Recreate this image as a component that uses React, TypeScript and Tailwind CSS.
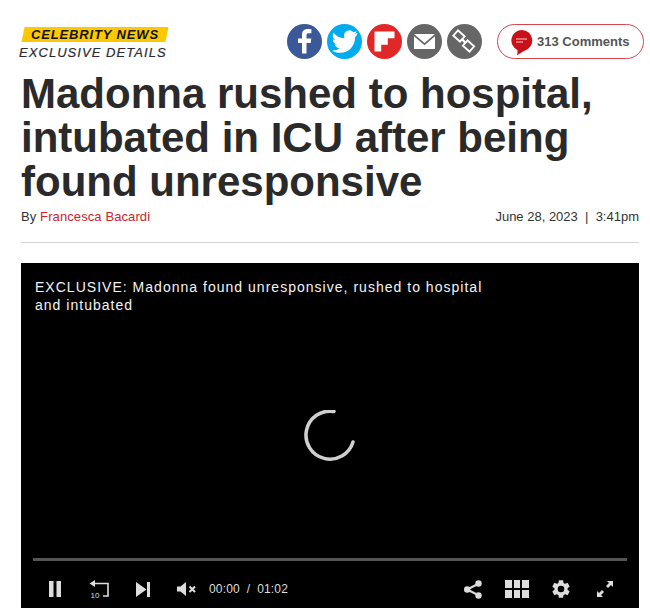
import React from "react";

function Circle({ color, children }: { color: string; children: React.ReactNode }) {
  return (
    <div className={`w-[35px] h-[35px] rounded-full flex items-center justify-center shrink-0 overflow-hidden ${color}`}>
      {children}
    </div>
  );
}

export default function App() {
  return (
    <div className="w-[650px] h-[608px] overflow-hidden bg-white pl-[21px] pr-[11px] pt-[24px] font-['Liberation_Sans',Arial,sans-serif]">
      <div className="flex items-start h-[35px]">
        <div className="w-[268px] shrink-0 -ml-[2px] pt-[3px]">
          <div className="ml-[4px] w-[144px] h-[15px] bg-[#fdc800] -skew-x-12 flex items-center justify-center">
            <span className="skew-x-12 text-[13px] leading-[15px] font-bold italic tracking-[0.85px] text-[#111]">CELEBRITY NEWS</span>
          </div>
          <div className="text-[13px] leading-[16px] mt-[3px] italic tracking-[1.05px] text-[#2a2a35] whitespace-nowrap [-webkit-text-stroke:0.2px_#2a2a35]">EXCLUSIVE DETAILS</div>
        </div>
        <div className="flex gap-[5px]">
          <Circle color="bg-[#3b5998]">
            <svg width="35" height="35" viewBox="0 0 35 35"><path fill="#fff" d="M19.500 29.500V19h4.200l.6-4.500h-4.800v-3c0-1.300.4-2.200 2.200-2.200h2.700V5.200c-.5-.1-2-.2-3.700-.2-3.500 0-5.700 2.100-5.700 5.900v3.600h-4V19h4v10.500z"/></svg>
          </Circle>
          <Circle color="bg-[#00aced]">
            <svg width="27" height="27" viewBox="0 0 24 24"><path fill="#fff" d="M23.500 4.500c-.8.400-1.800.6-2.700.8 1-.6 1.700-1.500 2.100-2.600-.9.500-1.900.9-3 1.100A4.700 4.700 0 0 0 11.800 8.100c0 .4 0 .7.100 1.100C8 9 4.500 7.100 2.200 4.200c-.4.700-.6 1.500-.6 2.400 0 1.600.8 3.100 2.100 3.900-.8 0-1.500-.2-2.100-.6v.1c0 2.300 1.600 4.200 3.800 4.600-.7.200-1.400.2-2.100.1.600 1.900 2.300 3.200 4.400 3.300A9.500 9.500 0 0 1 .8 20c2.100 1.300 4.600 2.100 7.200 2.100 8.700 0 13.400-7.200 13.400-13.400v-.6c.9-.7 1.700-1.500 2.100-3.600z"/></svg>
          </Circle>
          <Circle color="bg-[#e12828]">
            <svg width="35" height="35" viewBox="0 0 35 35"><path fill="#fff" d="M7.500 7.500h20v6.700h-6.700v6.600h-6.600v6.700H7.500z"/></svg>
          </Circle>
          <Circle color="bg-[#666666]">
            <svg width="35" height="35" viewBox="0 0 35 35"><path fill="#fff" d="M7 10h21L17.500 19zM7 12.300V25h21V12.300l-10.500 9z"/></svg>
          </Circle>
          <Circle color="bg-[#666666]">
            <svg width="35" height="35" viewBox="0 0 35 35" fill="none" stroke="#fff" strokeWidth="1.800"><rect x="7.500" y="8.500" width="9" height="7" transform="rotate(42 12 12)"/><rect x="17" y="18.500" width="9" height="7" transform="rotate(42 21.500 22)"/><path strokeWidth="2.200" d="M14.500 14.500l4.500 5"/></svg>
          </Circle>
        </div>
        <div className="ml-[15px] w-[147px] h-[35px] shrink-0 rounded-full border border-[#d9444b] flex items-center pl-[14px]">
          <svg width="22" height="27" viewBox="0 0 22 27" className="shrink-0 mt-[2px] -ml-[1px]">
            <path fill="#c8101a" d="M11 1a10.500 10.500 0 0 1 3 20.500C11 23 8 25 6 26.500c.5-1.800.6-3.500.4-5.500A10.500 10.500 0 0 1 11 1z"/>
            <path stroke="#f6c9c9" strokeWidth="1.200" d="M5 10h11M5 13h7"/>
          </svg>
          <span className="ml-[4px] text-[13px] font-bold text-[#555] leading-none whitespace-nowrap">313 Comments</span>
        </div>
      </div>

      <h1 className="mt-[13px] text-[42px] leading-[44px] font-bold text-[#2a2a2a] whitespace-nowrap">
        Madonna rushed to hospital,<br />intubated in ICU after being<br />found unresponsive
      </h1>

      <div className="flex justify-between items-center h-[16px] mt-[5px] text-[13px] text-[#333]">
        <div className="tracking-[0.1px]">By <span className="text-[#d0232b]">Francesca Bacardi</span></div>
        <div className="whitespace-pre">June 28, 2023  |  3:41pm</div>
      </div>

      <div className="h-px bg-[#d5d5d5] mt-[17px]" />

      <div className="mt-[20px] relative bg-black flex flex-col">
        <div className="absolute left-[14px] top-[15px] w-[470px] text-[14px] leading-[18px] tracking-[1.02px] text-[#f4f4f4]">
          EXCLUSIVE: Madonna found unresponsive, rushed to hospital and intubated
        </div>
        <div className="h-[295px] pt-[51px] flex items-center justify-center">
          <svg width="52" height="52" viewBox="0 0 52 52" className="-ml-[1px]">
            <path fill="none" stroke="#cfcfcf" strokeWidth="3.500" strokeLinecap="round" d="M30 1.500A24 24 0 1 0 49 32" />
          </svg>
        </div>
        <div className="h-[3px] mx-[12px] bg-[#555555]" />
        <div className="h-[56px] flex items-center justify-between pl-[28px] pr-[26px] text-[#dddddd]">
          <div className="flex items-center">
            <svg width="12" height="16" viewBox="0 0 12 16" fill="#dddddd"><rect width="4.500" height="16" /><rect x="7.500" width="4.500" height="16" /></svg>
            <svg width="20" height="18" viewBox="0 0 20 18" className="ml-[28px]" fill="none">
              <path stroke="#dddddd" strokeWidth="1.600" d="M4 3.500h15v12.500h-5" />
              <path fill="#dddddd" d="M6 0v7L0.500 3.500z" />
              <text x="1.500" y="17.500" fill="#dddddd" fontSize="8" fontFamily="Liberation Sans">10</text>
            </svg>
            <svg width="14" height="15" viewBox="0 0 14 15" className="ml-[27px]" fill="#dddddd"><path d="M0 0l10.500 7.500L0 15z" /><rect x="11" width="3" height="15" /></svg>
            <svg width="20" height="14" viewBox="0 0 20 14" className="ml-[27px]"><path fill="#dddddd" d="M0 4.500h3.500L9 0v14L3.500 9.500H0z" /><path stroke="#dddddd" strokeWidth="2" d="M12.500 4.500l5.500 5.500M18 4.500l-5.500 5.500" /></svg>
            <div className="ml-[12px] text-[12px] leading-none tracking-[0.15px] whitespace-pre">00:00  /  01:02</div>
          </div>
          <div className="flex items-center">
            <svg width="18" height="19" viewBox="0 0 18 19"><path stroke="#dddddd" strokeWidth="2" d="M15 3.500L3 9.500l12 6" fill="none" /><circle cx="14.500" cy="3.500" r="3.200" fill="#dddddd" /><circle cx="3.200" cy="9.500" r="3.200" fill="#dddddd" /><circle cx="14.500" cy="15.500" r="3.200" fill="#dddddd" /></svg>
            <div className="ml-[23px] grid grid-cols-3 gap-[2px] w-[24px]">
              <div className="h-[8px] bg-[#dddddd]" /><div className="h-[8px] bg-[#dddddd]" /><div className="h-[8px] bg-[#dddddd]" />
              <div className="h-[8px] bg-[#dddddd]" /><div className="h-[8px] bg-[#dddddd]" /><div className="h-[8px] bg-[#dddddd]" />
            </div>
            <svg width="22" height="22" viewBox="0 0 24 24" className="ml-[21px]"><path fill="#dddddd" d="M19.140 12.940c.04-.3.060-.61.060-.94s-.02-.64-.07-.94l2.030-1.580a.49.49 0 0 0 .12-.61l-1.920-3.320a.49.49 0 0 0-.59-.22l-2.390.96a7 7 0 0 0-1.620-.94l-.36-2.540a.48.48 0 0 0-.48-.41h-3.840a.48.48 0 0 0-.47.41l-.36 2.540c-.59.24-1.130.57-1.620.94l-2.390-.96a.48.48 0 0 0-.59.22L2.740 8.870a.48.48 0 0 0 .12.61l2.030 1.580c-.05.3-.09.63-.09.94s.02.64.07.94l-2.030 1.580a.49.49 0 0 0-.12.61l1.920 3.320c.12.22.37.29.59.22l2.390-.96c.5.38 1.030.7 1.620.94l.36 2.540c.05.24.24.41.48.41h3.840c.24 0 .44-.17.47-.41l.36-2.540c.59-.24 1.130-.56 1.620-.94l2.390.96c.22.08.47 0 .59-.22l1.920-3.320a.49.49 0 0 0-.12-.61zM12 15.600a3.600 3.600 0 1 1 0-7.200 3.600 3.600 0 0 1 0 7.200z" /></svg>
            <svg width="16" height="16" viewBox="0 0 16 16" className="ml-[25px]" fill="#dddddd"><path d="M10 0h6v6l-2-2-3 3-2-2 3-3zM6 16H0v-6l2 2 3-3 2 2-3 3z" /></svg>
          </div>
        </div>
      </div>
    </div>
  );
}
